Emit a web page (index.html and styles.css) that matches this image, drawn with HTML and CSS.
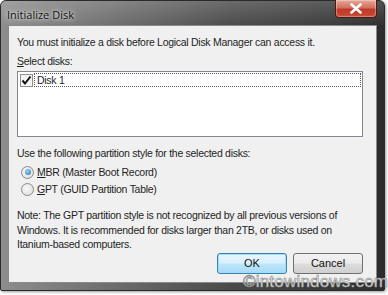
FILE: index.html
```html
<!DOCTYPE html>
<html>
<head>
<meta charset="utf-8">
<link rel="stylesheet" href="styles.css">
</head>
<body>
<div class="window">
  <div class="titlebar">
    <span class="title">Initialize Disk</span>
    <div class="close">
      <svg width="14" height="11" viewBox="0 0 14 11"><path d="M2.5 1.5 L11.5 9.5 M11.5 1.5 L2.5 9.5" stroke="#fff" stroke-width="2.6" stroke-linecap="round"/></svg>
    </div>
  </div>
  <div class="client">
    <p class="line intro">You must initialize a disk before Logical Disk Manager can access it.</p>
    <p class="line sel"><u>S</u>elect disks:</p>
    <div class="listbox">
      <div class="item">
        <span class="check">
          <svg width="11" height="11" viewBox="0 0 11 11"><path d="M1.5 5.5 L4 8.5 L9.5 1.5" stroke="#111" stroke-width="2" fill="none"/></svg>
        </span>
        <span class="itemtext">Disk 1</span>
      </div>
    </div>
    <p class="line use">Use the following partition style for the selected disks:</p>
    <div class="radio-row first"><span class="radio on"><span class="dot"></span></span><span><u>M</u>BR (Master Boot Record)</span></div>
    <div class="radio-row"><span class="radio"></span><span><u>G</u>PT (GUID Partition Table)</span></div>
    <p class="note">Note: The GPT partition style is not recognized by all previous versions of Windows. It is recommended for disks larger than 2TB, or disks used on Itanium-based computers.</p>
    <div class="buttons">
      <button class="btn ok">OK</button>
      <button class="btn">Cancel</button>
    </div>
  </div>
  <div class="watermark">©intowindows.com</div>
</div>
</body>
</html>
```
FILE: styles.css
```css
html, body {
  margin: 0;
  padding: 0;
  background: #ffffff;
}
body {
  width: 388px;
  height: 295px;
  overflow: hidden;
  font-family: "Liberation Sans", Arial, sans-serif;
  font-size: 10.5px;
  letter-spacing: -0.28px;
  color: #1e1e1e;
}
.window {
  position: relative;
  width: 385px;
  height: 291px;
  box-sizing: border-box;
  border: 1px solid #2a2a2a;
  border-radius: 6px 6px 2px 2px;
  background: linear-gradient(to right, #8d8d8d 0%, #6c6c6c 30%, #4a4a4a 60%, #3a3a3a 85%, #2c2c2c 100%);
  display: flex;
  flex-direction: column;
  box-shadow: 1px 1px 3px rgba(0,0,0,0.4);
}
.titlebar {
  height: 24px;
  display: flex;
  align-items: flex-start;
  justify-content: space-between;
  background: linear-gradient(to bottom, rgba(255,255,255,0.18), rgba(255,255,255,0.02));
  border-radius: 5px 5px 0 0;
}
.title {
  margin: 6px 0 0 6px;
  font-family: "Open Sans", "Liberation Sans", sans-serif;
  font-size: 11px;
  letter-spacing: 0;
  color: #111;
  text-shadow: 0 0 6px rgba(255,255,255,0.85), 0 0 3px rgba(255,255,255,0.7);
}
.close {
  width: 42px;
  height: 18px;
  margin: -1px 7px 0 0;
  box-sizing: border-box;
  border: 1px solid #4a1a14;
  border-top: none;
  border-radius: 0 0 4px 4px;
  background: linear-gradient(to bottom, #e6a798 0%, #d4705e 45%, #c0392a 55%, #c94a30 100%);
  display: flex;
  align-items: center;
  justify-content: center;
  box-shadow: inset 0 0 1px 1px rgba(255,255,255,0.35);
}
.client {
  flex: 1;
  margin: 0 7px 7px 7px;
  background: #f0f0f0;
  border: 1px solid #8a8a8a;
  padding: 9px 13px 0 8px;
  display: flex;
  flex-direction: column;
}
.line {
  margin: 0;
  line-height: 15px;
}
.sel { margin-top: 4px; }
.listbox {
  margin-top: 2px;
  height: 66px;
  box-sizing: border-box;
  background: #fff;
  border: 1px solid #828790;
  padding: 1px;
}
.item {
  display: flex;
  align-items: center;
  height: 14px;
}
.check {
  width: 11px;
  height: 11px;
  border: 1px solid #8e8f8f;
  background: #f4f4f4;
  margin: 0 1px 0 1px;
  display: flex;
}
.itemtext {
  flex: 1;
  height: 12px;
  line-height: 12px;
  padding-left: 2px;
  border: 1px dotted #555;
}
.use { margin-top: 9px; }
.radio-row {
  display: flex;
  align-items: center;
  height: 16px;
  margin-top: 1px;
}
.radio-row.first { margin-top: 3px; }
.radio {
  width: 11px;
  height: 11px;
  border-radius: 50%;
  border: 1px solid #8b8b8b;
  background: radial-gradient(circle at 40% 40%, #fafafa, #d8d8d8);
  margin: 0 3px 0 4px;
  display: flex;
  align-items: center;
  justify-content: center;
}
.dot {
  width: 6px;
  height: 6px;
  border-radius: 50%;
  background: radial-gradient(circle at 40% 35%, #9fd3f5, #1e6fb5);
}
.note {
  margin: 11px 0 0 0;
  line-height: 14.5px;
}
.buttons {
  display: flex;
  justify-content: flex-end;
  gap: 6px;
  margin-top: 1px;
}
.btn {
  width: 70px;
  height: 21px;
  font-family: "Liberation Sans", Arial, sans-serif;
  font-size: 11px;
  color: #111;
  border: 1px solid #707070;
  border-radius: 3px;
  background: linear-gradient(to bottom, #f2f2f2 0%, #ebebeb 48%, #dddddd 52%, #cfcfcf 100%);
  padding: 0;
}
.btn.ok {
  border-color: #3c7fb1;
  background: linear-gradient(to bottom, #eaf6fd 0%, #d9f0fc 48%, #bee6fd 52%, #a7d9f5 100%);
  box-shadow: inset 0 0 0 1px #9de0fc;
}
.watermark {
  position: absolute;
  left: 242px;
  top: 272px;
  font-family: "Liberation Sans", Arial, sans-serif;
  font-size: 17px;
  line-height: 17px;
  color: #ececec;
  -webkit-text-stroke: 0.6px #8a8a8a;
  letter-spacing: 0.2px;
}
```
